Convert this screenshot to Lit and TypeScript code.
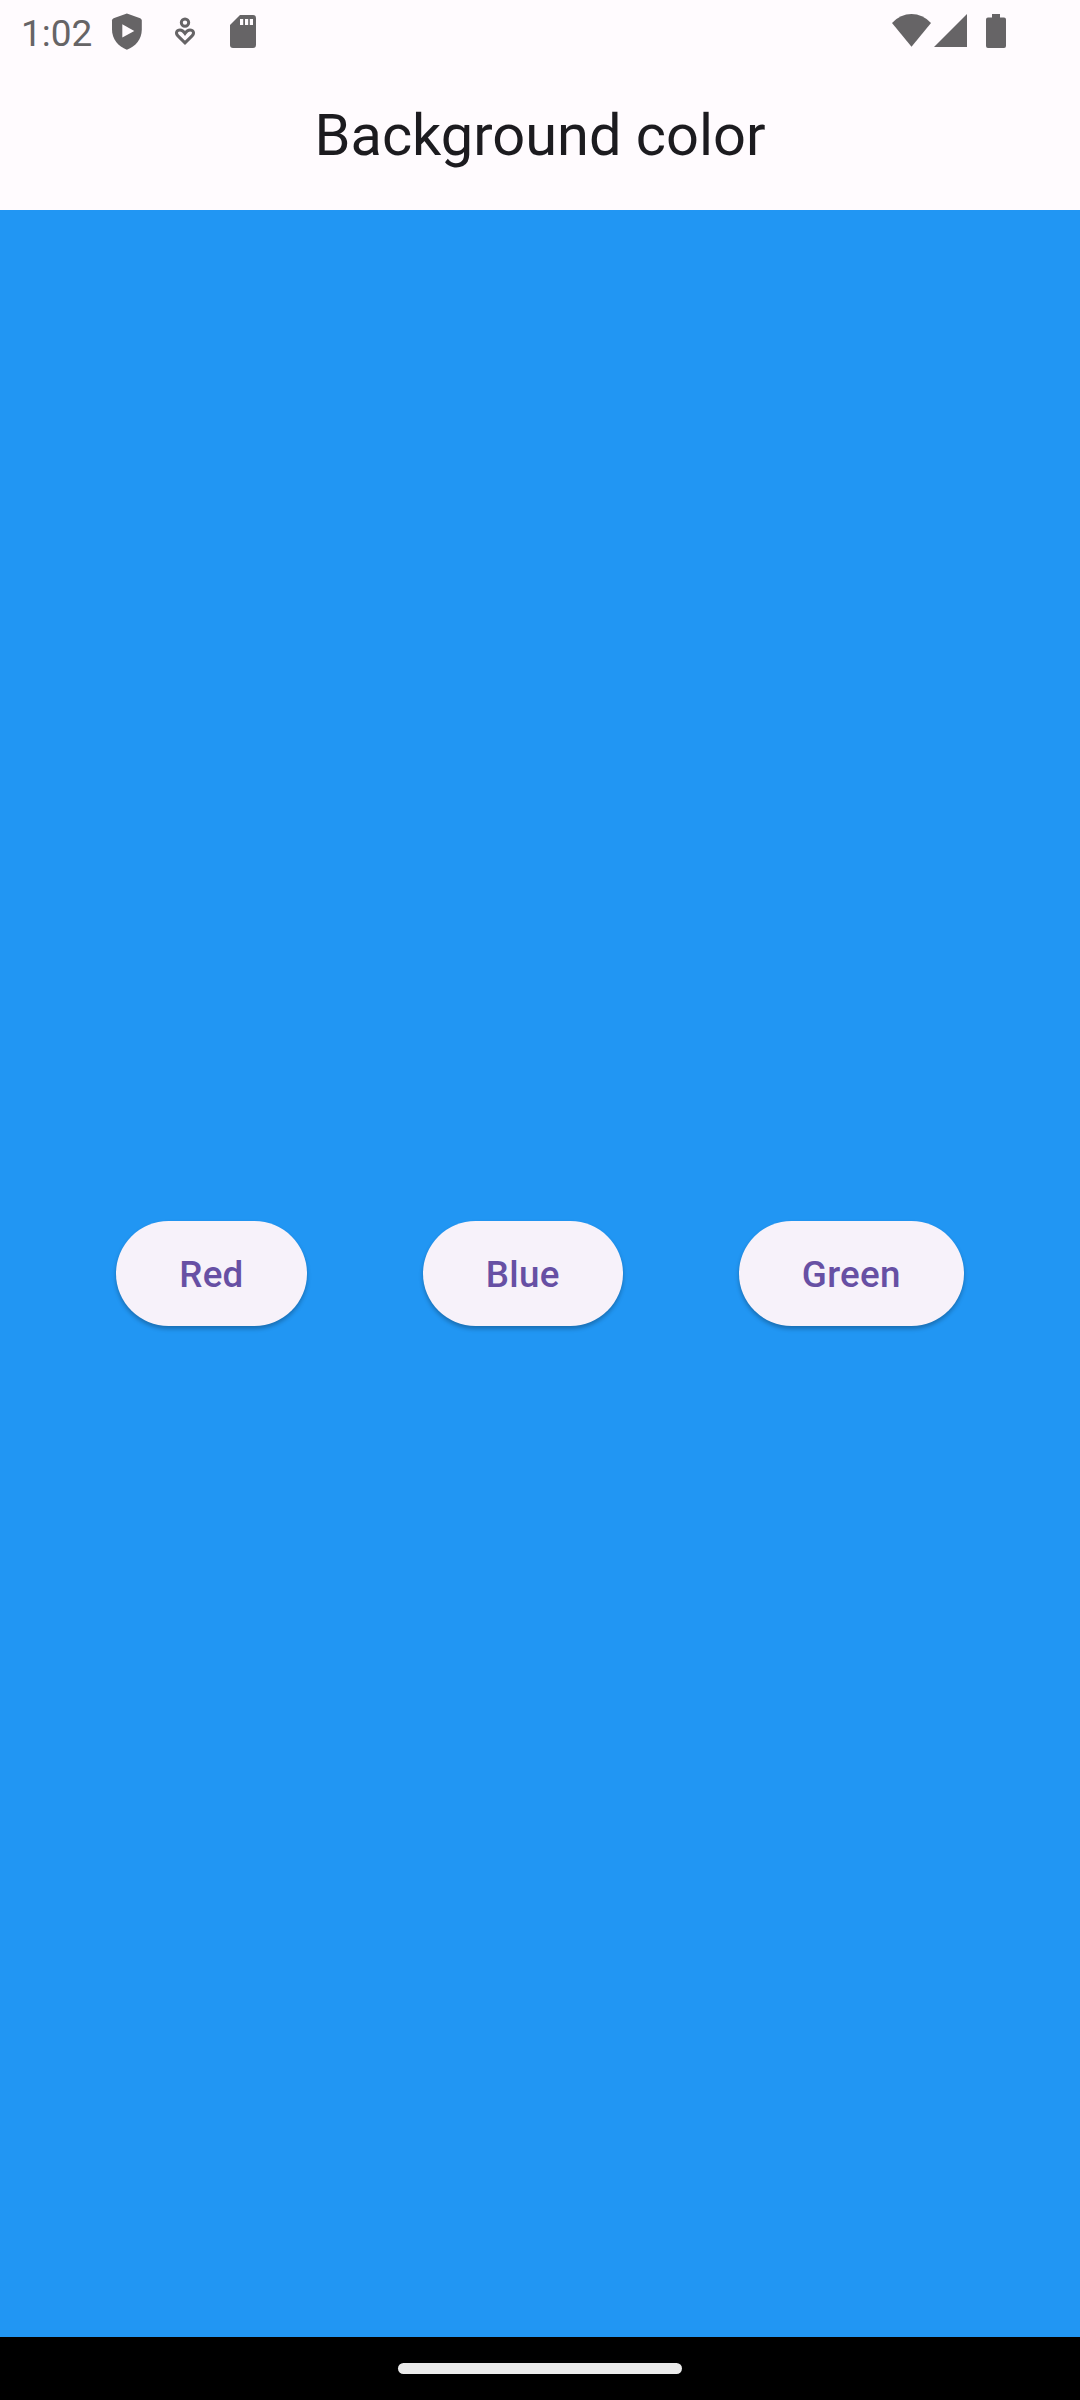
import { LitElement, html, css } from "lit";
import { customElement, property } from "lit/decorators.js";

@customElement("status-bar")
class StatusBar extends LitElement {
  static styles = css`
    :host {
      display: flex;
      justify-content: space-between;
      box-sizing: border-box;
      height: 63px;
      padding: 0 73px 0 21px;
      color: #666466;
      font-family: Roboto, sans-serif;
    }
    .group {
      display: flex;
      align-items: center;
    }
    .clock {
      font-size: 37px;
      line-height: 43px;
      width: 90px;
      padding-top: 3px;
    }
    svg {
      display: block;
      height: 63px;
      fill: currentColor;
    }
    .line {
      fill: none;
      stroke: currentColor;
      stroke-width: 3;
    }
    .hole {
      fill: #fffbfe;
    }
  `;

  render() {
    return html`
      <div class="group">
        <div class="clock">1:02</div>
        <svg width="32" viewBox="111 0 32 63">
          <path d="M126.9 13.4 L140.2 18.2 Q141.8 18.9 141.8 20.6 V29.5 C141.8 39 135.6 46.6 126.9 49.7 C118.2 46.6 112 39 112 29.5 V20.6 Q112 18.9 113.6 18.2 Z" />
          <path class="hole" d="M122.3 24.3 L134.3 30.9 L122.3 37.5 Z" />
        </svg>
        <svg width="87" viewBox="143 0 87 63">
          <circle class="line" cx="185" cy="22.6" r="3.7" />
          <path class="line" d="M185 42.8 L178.2 36.2 C174.8 32.6 177 30 180 30 C182.4 30 183.8 31.6 185 33.4 C186.2 31.6 187.6 30 190 30 C193 30 195.2 32.6 191.8 36.2 Z" />
        </svg>
        <svg width="26" viewBox="230 0 26 63">
          <path d="M240 15 H253 Q256 15 256 18 V45 Q256 48 253 48 H233 Q230 48 230 45 V25 Z" />
          <path class="hole" d="M240 19h3.2v6h-3.2z M245 19h3.2v6h-3.2z M249.8 19h3.2v6h-3.2z" />
        </svg>
      </div>
      <div class="group">
        <svg width="116" viewBox="891 0 116 63">
          <path d="M892 22.9 Q900.5 14 911.5 14 Q922.5 14 931 22.9 L911.5 46.7 Z" />
          <path d="M967 14 V47 H934 Z" />
          <path d="M992 14 H1000 V17.5 H1004 Q1006 17.5 1006 19.5 V46 Q1006 48 1004 48 H988 Q986 48 986 46 V19.5 Q986 17.5 988 17.5 H992 Z" />
        </svg>
      </div>
    `;
  }
}

@customElement("elevated-button")
class ElevatedButton extends LitElement {
  @property() label = "";

  static styles = css`
    :host {
      display: block;
    }
    button {
      display: block;
      height: 105px;
      margin: 0;
      padding: 3px 63px 0;
      border: 0;
      border-radius: 52.5px;
      background: #f7f2fa;
      color: #6750a4;
      font: 500 36.75px/52.5px Roboto, sans-serif;
      letter-spacing: 0.2625px;
      box-shadow: 0 3px 4px rgba(0, 0, 0, 0.26);
    }
  `;

  render() {
    return html`<button>${this.label}</button>`;
  }
}

@customElement("app-root")
class AppRoot extends LitElement {
  static styles = css`
    :host {
      display: flex;
      flex-direction: column;
      width: 1080px;
      height: 2400px;
      background: #fffbfe;
    }
    .title {
      box-sizing: border-box;
      height: 147px;
      margin: 0;
      text-align: center;
      color: #1c1b1f;
      font: 400 57.75px/145px Roboto, sans-serif;
    }
    .content {
      flex: 1;
      display: flex;
      align-items: center;
      justify-content: space-evenly;
      background: #2196f3;
    }
    .navigation {
      display: flex;
      align-items: center;
      justify-content: center;
      height: 63px;
      background: #000;
    }
    .handle {
      width: 284px;
      height: 11px;
      border-radius: 5.5px;
      background: #ebebeb;
    }
  `;

  render() {
    return html`
      <status-bar></status-bar>
      <h1 class="title">Background color</h1>
      <main class="content">
        ${["Red", "Blue", "Green"].map(
          (name) => html`<elevated-button .label=${name}></elevated-button>`
        )}
      </main>
      <div class="navigation"><div class="handle"></div></div>
    `;
  }
}
